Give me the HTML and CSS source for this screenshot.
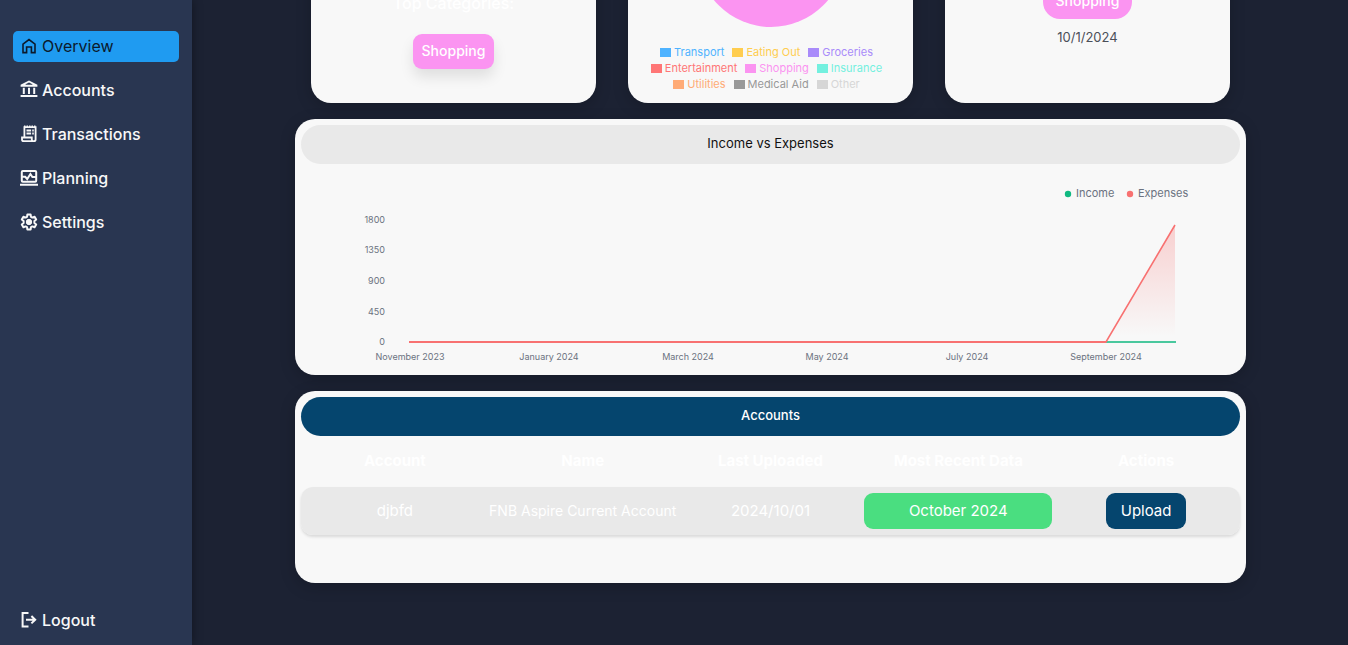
FILE: index.html
```html
<!DOCTYPE html>
<html lang="en">
<head>
<meta charset="utf-8">
<title>Overview</title>
<meta name="viewport" content="width=device-width, initial-scale=1">
<link rel="stylesheet" href="styles.css">
</head>
<body>
<div class="app">
  <nav class="sidebar">
    <a class="nav-item active" href="#overview">
      <svg class="nav-icon" viewBox="0 0 18 18" fill="none" stroke="currentColor" stroke-width="1.6"><path d="M3 7.200 9 2.600l6 4.600V15.600h-3.600V10H6.600v5.600H3z"/></svg>
      Overview</a>
    <a class="nav-item" href="#accounts">
      <svg class="nav-icon" viewBox="0 0 18 18" fill="currentColor"><path fill-rule="evenodd" d="M9 -.6 17.400 3.800v2H.6v-2zM9 1.400 5.600 3.300v.5h6.800v-.5z"/><path d="M2.800 6.800h2v6.200h-2zM8 6.800h2v6.200H8zM13.200 6.800h2v6.200h-2zM.6 14h16.800v2H.6z"/></svg>
      Accounts</a>
    <a class="nav-item" href="#transactions">
      <svg class="nav-icon" viewBox="0 0 18 18" fill="none" stroke="currentColor" stroke-width="1.800"><path d="M4.400 12V2.200H15.600V14.500a1.700 1.700 0 0 1-1.700 1.700H3.700A1.700 1.700 0 0 1 2 14.500V12.500H11.800v2a1.700 1.700 0 0 0 1.900 1.700"/><path d="M4 1.400h12" stroke-dasharray="1.500 1"/><path d="M6.500 5.500h4.600M12.200 5.500h1.600M6.500 8.500h4.600M12.200 8.500h1.600"/></svg>
      Transactions</a>
    <a class="nav-item" href="#planning">
      <svg class="nav-icon" viewBox="0 0 18 18" fill="none" stroke="currentColor" stroke-width="2"><rect x="1.800" y="2" width="14.400" height="10.800" rx="1"/><path d="M0 15.800h18M2 7.800h3.200l2 2.200 3.200-5 2 3H16"/></svg>
      Planning</a>
    <a class="nav-item" href="#settings">
      <svg class="nav-icon" viewBox="0 0 18 18" fill="none" stroke="currentColor" stroke-width="2" stroke-linejoin="round"><path d="M7.400 1.500h3.200l.4 2.300 1.400.8 2.200-.9 1.600 2.800-1.800 1.500v2l1.800 1.500-1.600 2.800-2.200-.9-1.400.8-.4 2.300H7.400L7 14.200l-1.400-.8-2.200.9-1.600-2.800L3.600 10V8L1.800 6.500l1.600-2.800 2.200.9L7 3.800z"/><circle cx="9" cy="9" r="2.700" fill="currentColor" stroke-width="1"/></svg>
      Settings</a>
    <a class="nav-item logout" href="#logout">
      <svg class="nav-icon" viewBox="0 0 18 18" fill="none" stroke="currentColor" stroke-width="2"><path d="M8.500 2H2.600v13.400h5.900M6 8.700h9M11.400 5 15.200 8.700l-3.800 3.700"/></svg>
      Logout</a>
  </nav>

  <main class="content">
    <section class="summary">
      <article class="card summary-card top-categories">
        <h2 class="card-label">Top Categories:</h2>
        <span class="tag">Shopping</span>
      </article>
      <article class="card summary-card breakdown">
        <svg class="pie" viewBox="0 0 148 148"><circle cx="74" cy="74" r="74" fill="#fb94f1"/></svg>
        <ul class="pie-legend">
          <li class="transport">Transport</li>
          <li class="eating">Eating Out</li>
          <li class="groceries">Groceries</li>
          <li class="entertainment">Entertainment</li>
          <li class="shopping">Shopping</li>
          <li class="insurance">Insurance</li>
          <li class="utilities">Utilities</li>
          <li class="medical">Medical Aid</li>
          <li class="other">Other</li>
        </ul>
      </article>
      <article class="card summary-card latest">
        <span class="tag tag-round">Shopping</span>
        <time class="date" datetime="2024-10-01">10/1/2024</time>
      </article>
    </section>

    <section class="card panel">
      <h2 class="panel-title">Income vs Expenses</h2>
      <svg class="chart" viewBox="0 0 939 205">
        <defs>
          <linearGradient id="expense-fill" x1="0" y1="0" x2="0" y2="1">
            <stop offset="0" stop-color="#f87171" stop-opacity=".3"/>
            <stop offset=".95" stop-color="#f87171" stop-opacity="0"/>
          </linearGradient>
        </defs>
        <g class="legend-text">
          <circle cx="767" cy="30" r="3.200" fill="#10b981"/>
          <text x="775" y="33">Income</text>
          <circle cx="829" cy="30" r="3.200" fill="#f87171"/>
          <text x="837" y="33">Expenses</text>
        </g>
        <g class="axis-text y-axis">
          <text x="84" y="59">1800</text>
          <text x="84" y="89">1350</text>
          <text x="84" y="120">900</text>
          <text x="84" y="151">450</text>
          <text x="84" y="181">0</text>
        </g>
        <g class="axis-text x-axis">
          <text x="109" y="196">November 2023</text>
          <text x="248" y="196">January 2024</text>
          <text x="387" y="196">March 2024</text>
          <text x="526" y="196">May 2024</text>
          <text x="666" y="196">July 2024</text>
          <text x="805" y="196">September 2024</text>
        </g>
        <path d="M805 178 874 61V178z" fill="url(#expense-fill)"/>
        <path d="M108 178H875" stroke="#10b981" stroke-width="1.600"/>
        <path d="M108 178H805" stroke="#f87171" stroke-width="2"/>
        <path d="M804 178H805L874 61" fill="none" stroke="#f87171" stroke-width="1.600"/>
      </svg>
    </section>

    <section class="card panel accounts">
      <h2 class="panel-title panel-title-dark">Accounts</h2>
      <table class="accounts-table">
        <thead>
          <tr><th>Account</th><th>Name</th><th>Last Uploaded</th><th>Most Recent Data</th><th>Actions</th></tr>
        </thead>
        <tbody>
          <tr>
            <td>djbfd</td>
            <td class="account-name">FNB Aspire Current Account</td>
            <td>2024/10/01</td>
            <td class="action-cell"><span class="month">October 2024</span></td>
            <td class="action-cell"><button class="upload" type="button">Upload</button></td>
          </tr>
        </tbody>
      </table>
    </section>
  </main>
</div>
</body>
</html>
```
FILE: styles.css
```css
* {
  box-sizing: border-box;
}

body {
  margin: 0;
  background: #1c2233;
  color: #fff;
  font-family: Inter, "Open Sans", sans-serif;
  font-size: 15px;
}

h2, ul {
  margin: 0;
  padding: 0;
  font-weight: 500;
}

.app {
  display: flex;
  height: 100vh;
  overflow: hidden;
}

.sidebar {
  display: flex;
  flex-direction: column;
  flex: 0 0 192px;
  gap: 13px;
  padding: 31px 13px 9px;
  background: #293651;
  box-shadow: 0 0 10px rgba(0, 0, 0, .4);
}

.nav-item {
  display: flex;
  align-items: center;
  gap: 4px;
  height: 31px;
  padding: 0 7px 2px;
  border-radius: 5px;
  color: #f8f8f8;
  font-size: 16px;
  font-weight: 500;
  text-decoration: none;
}

.nav-item.active {
  background: #1f9bf1;
  color: #0c1a2c;
  font-weight: 400;
}

.nav-icon {
  flex: none;
  width: 18px;
  height: 18px;
  overflow: visible;
}

.logout {
  margin-top: auto;
}

.content {
  display: flex;
  flex: 1;
  flex-direction: column;
  justify-content: flex-end;
  gap: 16px;
  min-width: 0;
  padding: 0 102px 62px 103px;
}

.card {
  border-radius: 20px;
  background: #f8f8f8;
  box-shadow: 0 4px 16px rgba(0, 0, 0, .2);
}

.summary {
  display: grid;
  grid-template-columns: repeat(3, 1fr);
  gap: 32px;
  padding: 0 16px;
}

.summary-card {
  display: flex;
  flex-direction: column;
  align-items: center;
  justify-content: flex-end;
  min-height: 285px;
}

.top-categories {
  gap: 20px;
  padding-bottom: 34px;
}

.card-label {
  font-size: 16px;
  line-height: 22px;
}

.tag {
  padding: 0 9px 2px;
  border-radius: 9px;
  background: #fb94f1;
  box-shadow: 0 8px 14px rgba(0, 0, 0, .1);
  font-size: 14px;
  font-weight: 500;
  line-height: 33px;
}

.tag-round {
  padding: 0 13px 2px;
  border-radius: 17px;
  box-shadow: none;
}

.breakdown {
  gap: 17px;
  padding: 0 20px 11px;
}

.pie {
  width: 148px;
  height: 148px;
}

.pie-legend {
  display: flex;
  flex-wrap: wrap;
  justify-content: center;
  column-gap: 8px;
  padding-right: 8px;
  list-style: none;
  font-size: 11px;
  font-weight: 400;
  line-height: 16px;
}

.pie-legend li {
  display: flex;
  align-items: center;
  gap: 3px;
}

.pie-legend li::before {
  width: 11px;
  height: 9px;
  background: currentColor;
  content: "";
}

.transport { color: #4fb3ff; }
.eating { color: #ffcd4f; }
.groceries { color: #a98bfa; }
.entertainment { color: #ff7676; }
.shopping { color: #fb94f1; }
.insurance { color: #74f0df; }
.utilities { color: #ffab76; }
.medical { color: #999; }
.other { color: #d6d6d6; }

.latest {
  gap: 8px;
  padding-bottom: 56px;
}

.date {
  color: #4b4f58;
  font-size: 13px;
  line-height: 20px;
}

.panel {
  padding: 6px;
}

.panel-title {
  border-radius: 20px;
  background: #e9e9e9;
  color: #111;
  font-size: 13px;
  font-weight: 400;
  line-height: 37px;
  padding-bottom: 2px;
  text-align: center;
}

.panel-title-dark {
  background: #05456e;
  color: #fff;
  font-weight: 500;
}

.chart {
  display: block;
  width: 100%;
}

.legend-text {
  fill: #6b7280;
  font-size: 11px;
}

.axis-text {
  fill: #6b7280;
  font-size: 9px;
}

.y-axis {
  text-anchor: end;
}

.x-axis {
  text-anchor: middle;
}

.accounts {
  padding-bottom: 48px;
}

.accounts-table {
  width: 100%;
  border-spacing: 0;
  table-layout: fixed;
  text-align: center;
}

.accounts-table th {
  height: 51px;
  padding: 0 0 3px;
  font-weight: 700;
}

.accounts-table td {
  height: 48px;
  padding: 0 0 2px;
  background: #e9e9e9;
}

.accounts-table .action-cell {
  padding: 0;
}

.accounts-table tbody tr {
  border-radius: 12px;
  box-shadow: 0 2px 3px rgba(0, 0, 0, .12);
}

.accounts-table td:first-child {
  border-radius: 12px 0 0 12px;
}

.accounts-table td:last-child {
  border-radius: 0 12px 12px 0;
}

.accounts-table .account-name {
  font-size: 14px;
}

.month {
  display: block;
  border-radius: 9px;
  background: #4ade80;
  line-height: 36px;
}

.upload {
  width: 80px;
  height: 36px;
  padding: 0 0 1px;
  border: 0;
  border-radius: 9px;
  background: #05456e;
  color: #fff;
  font: inherit;
}
```
